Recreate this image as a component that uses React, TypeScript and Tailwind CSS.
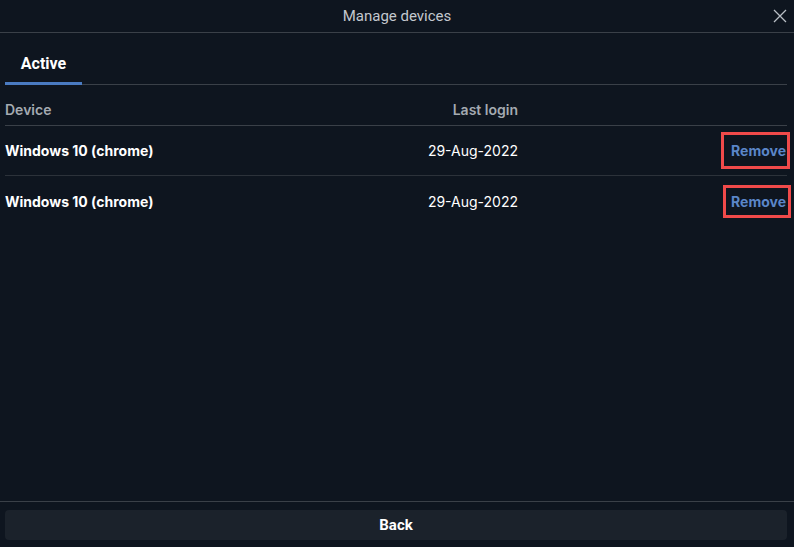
export default function App() {
  const devices = [
    { name: "Windows 10 (chrome)", last: "29-Aug-2022" },
    { name: "Windows 10 (chrome)", last: "29-Aug-2022" },
  ];

  return (
    <div className="flex flex-col w-[794px] h-[547px] bg-[#0e151f] text-white overflow-hidden">
      <div className="relative flex items-center justify-center h-[33px] border-b border-[#3a4048] shrink-0">
        <span className="text-[15px] text-[#c3c8ce] font-['Roboto',sans-serif]">Manage devices</span>
        <button className="absolute right-[6px] top-[8px] text-[#b8bec5]">
          <svg width="16" height="16" viewBox="0 0 16 16" fill="none" stroke="currentColor" strokeWidth="1.3">
            <path d="M2 2l12 12M14 2L2 14" />
          </svg>
        </button>
      </div>

      <div className="px-[5px] pt-[10px] shrink-0">
        <div className="flex border-b border-[#3a4048] w-[782px]">
          <div className="w-[77px] flex justify-center pb-[6px] pt-[9px] border-b-[3px] border-[#4a7bc2] -mb-px">
            <span className="text-[16px] font-bold font-['Roboto',sans-serif] text-white">Active</span>
          </div>
        </div>
      </div>

      <div className="flex-1 px-[5px] pt-[7px] font-['Inter',sans-serif]">
        <div className="w-[782px]">
          <div className="grid grid-cols-[255px_258px_1fr] h-[34px] pt-[2px] items-center border-b border-[#3a4048] text-[14px] font-semibold text-[#a4aab1]">
            <span>Device</span>
            <span className="text-right">Last login</span>
            <span />
          </div>
          {devices.map((d, i) => (
            <div
              key={i}
              className={`grid grid-cols-[255px_258px_1fr] h-[50px] items-center text-[14px] ${i === 0 ? "border-b border-[#2c323a]" : ""}`}
            >
              <span className="font-bold text-white">{d.name}</span>
              <span className="text-right text-white">{d.last}</span>
              <span className="flex justify-end">
                <span className="relative font-bold text-[#5b86c8] mr-px">
                  Remove
                  <span
                    className={`absolute border-[3px] border-[#f04a4a] ${i === 0 ? "-left-[10px] -right-[4px] -top-[8px] -bottom-[8px]" : "-left-[8px] -right-[5px] -top-[6px] -bottom-[6px]"}`}
                  />
                </span>
              </span>
            </div>
          ))}
        </div>
      </div>

      <div className="border-t border-[#3a4048] px-[5px] pt-[8px] pb-[7px] shrink-0">
        <button className="w-[782px] h-[30px] rounded-[4px] bg-[#1b222b] text-[15px] font-bold text-white font-['Roboto',sans-serif]">
          Back
        </button>
      </div>
    </div>
  );
}
